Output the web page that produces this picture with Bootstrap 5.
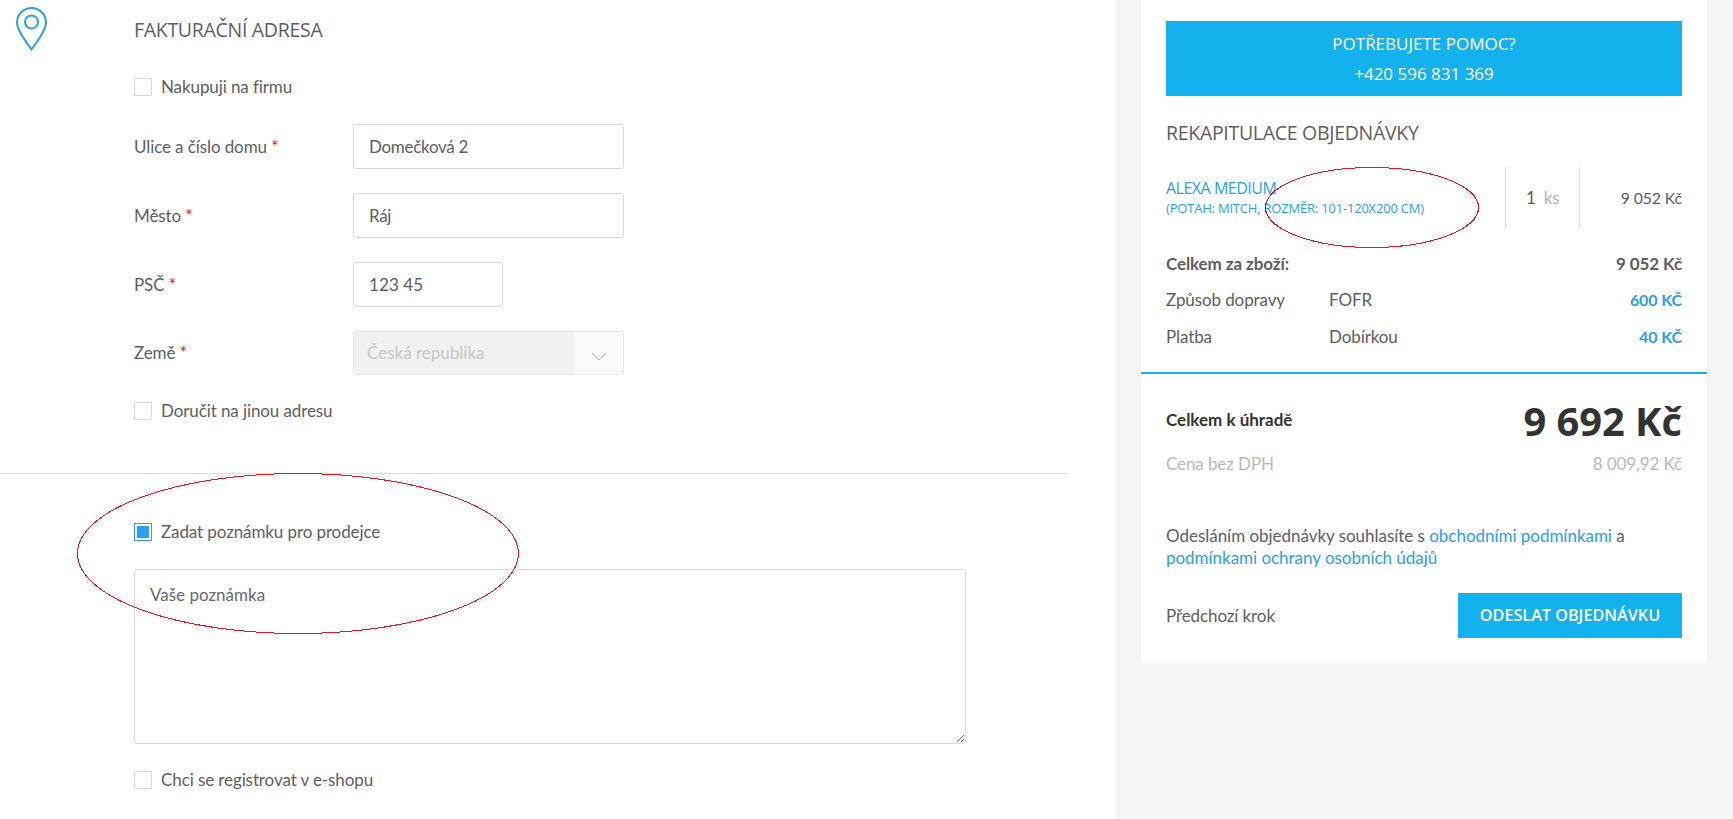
<!DOCTYPE html>
<html lang="cs">
<head>
<meta charset="utf-8">
<title>Objednávka</title>
<link href="https://cdn.jsdelivr.net/npm/bootstrap@5.3.0/dist/css/bootstrap.min.css" rel="stylesheet">
<style>
html,body{height:819px;overflow:hidden}
body{font-family:"Lato","Noto Sans",sans-serif;font-size:17px;color:#5e5e5e;background:#fff;position:relative;line-height:24px;letter-spacing:-.1px}
a{color:#2a9df4;text-decoration:none}
.page-wrap{height:819px}
.left-side{width:1116px;flex:none}
.left-block{width:1067px}
.pin-col{width:134px;padding:7px 0 0 16px;flex:none}
.main-col{width:832px}
.head-txt{font-family:"Open Sans",sans-serif;font-size:19.5px;line-height:24px;color:#5e5e5e;text-transform:uppercase;margin:0;letter-spacing:-.3px;font-weight:400}
.head-top{margin-top:18px}
.chk-row{height:24px;display:flex;align-items:center;gap:9px;margin:0}
.chk-row .form-check-input{width:18px;height:18px;margin:0;border-radius:0;border:1px solid #d9d9d9;flex:none}
.chk-row .form-check-input:checked{background-color:#2a9df4;background-image:none;border-color:#2a9df4;box-shadow:inset 0 0 0 2px #fff}
.field-row{display:flex;align-items:center;height:45px}
.field-lbl{width:219px;flex:none;margin:0}
.req{color:#e3120b}
.fld{height:45px;border:1px solid #d9d9d9;border-radius:3px;padding:0 15px;font-size:17px;color:#5e5e5e;width:271px;letter-spacing:-.3px}
.fld-short{width:150px;letter-spacing:.1px}
.sel-box{display:flex;width:271px;height:44px;border:1px solid #e6e6e6;border-radius:3px;overflow:hidden;background:#f9f9f9}
.sel-box .form-select{flex:1;min-width:0;border:0;border-radius:0;background:#f1f1f1;background-image:none;color:#c6c6c6;font-size:17px;padding:0 13px;opacity:1;height:100%}
.sel-arrow{width:49px;display:flex;align-items:center;justify-content:center;padding-top:8px}
.hr-line{height:1px;background:#dcdcdc;width:1067px;margin-top:50px}
.note-area{height:175px;width:832px;border:1px solid #d9d9d9;border-radius:3px;padding:12px 15px;font-size:17px;color:#5e5e5e;display:block;box-shadow:none}
.note-area::placeholder{color:#6a6a6a;opacity:1}
.side-col{flex:1;background:#f5f5f5;padding:0 26px 0 25px}
.panel-box{background:#fff;height:663px}
.panel-pad{padding:21px 25px 0}
.help-box{background:#14b1ef;color:#fff;height:75px;padding:8px 0;text-align:center;line-height:30px;font-size:17px;font-family:"Open Sans",sans-serif;font-weight:500;letter-spacing:0}
.item-row{display:flex;height:61px;margin-top:22px}
.item-name{width:339px;flex:none;align-self:center;color:#2a9df4}
.item-title{font-size:16px;line-height:20px;font-family:"Open Sans",sans-serif;letter-spacing:-.5px}
.item-sub{font-size:13px;line-height:20px;font-family:"Open Sans",sans-serif;letter-spacing:-.2px}
.item-qty{width:75px;flex:none;border-left:1px solid #d9d9d9;border-right:1px solid #d9d9d9;display:flex;align-items:center;padding-left:20px;gap:8px}
.ks-txt{color:#b5b5b5}
.item-price{flex:1;display:flex;align-items:center;justify-content:flex-end;font-size:15.800px}
.sum-row{display:flex;height:24px;align-items:center}
.sum-lbl{width:163px;flex:none}
.blue-val{margin-left:auto;color:#2a9df4;font-weight:700;font-size:16px}
.blue-line{height:2px;background:#14b1ef;margin-top:23px}
.pay-row{display:flex;height:50px;align-items:center;justify-content:space-between;margin-top:22px}
.pay-lbl{font-family:"Lato",sans-serif;font-weight:700;font-size:17px;color:#333;margin-top:-3px;letter-spacing:0}
.pay-val{font-family:"Open Sans",sans-serif;font-weight:700;font-size:39.800px;color:#333;line-height:50px;letter-spacing:0}
.vat-row{display:flex;height:24px;justify-content:space-between;margin-top:6px;color:#b9b9b9;align-items:center}
.terms-txt{margin:49px 0 0;line-height:22px;letter-spacing:-.03px}
.act-row{display:flex;justify-content:space-between;align-items:center;margin-top:24px}
.send-btn{background:#14b1ef;color:#fff;width:224px;height:45px;border:0;border-radius:0;font-size:16.200px;font-family:"Open Sans",sans-serif;padding:0;font-weight:600;letter-spacing:0}
.send-btn:hover{background:#14b1ef;color:#fff}
.oval-mark{position:absolute;pointer-events:none;fill:none;stroke:#ee0f26;stroke-width:1;shape-rendering:crispEdges}
.oval-one{left:77px;top:473px}
.oval-two{left:1265px;top:167px}
.mt-chk1{margin-top:33px}
.mt-f1{margin-top:25px}
.mt-f2{margin-top:24px}
.mt-f3{margin-top:23px}
.mt-c2{margin-top:46px}
.mt-s1{margin-top:12px}
.mt-s2{margin-top:13px}
</style>
</head>
<body>
<div class="d-flex page-wrap">
  <div class="left-side">
    <div class="left-block">
      <div class="d-flex">
        <div class="pin-col">
          <svg width="31" height="44" viewBox="0 0 31 44" fill="none" stroke="#2a9df4" stroke-width="2"><path d="M15.5 1C7.5 1 1 7.500 1 15.200C1 22.500 8.500 32.500 15.500 42.500C22.500 32.500 30 22.500 30 15.200C30 7.500 23.500 1 15.500 1Z"/><circle cx="15.500" cy="15" r="6.500"/></svg>
        </div>
        <div class="main-col">
          <h2 class="head-txt head-top">Fakturační adresa</h2>
          <label class="chk-row mt-chk1"><input class="form-check-input" type="checkbox"><span>Nakupuji na firmu</span></label>
          <div class="field-row mt-f1"><label class="field-lbl">Ulice a číslo domu <span class="req">*</span></label><input class="form-control fld" value="Domečková 2"></div>
          <div class="field-row mt-f2"><label class="field-lbl">Město <span class="req">*</span></label><input class="form-control fld" value="Ráj"></div>
          <div class="field-row mt-f2"><label class="field-lbl">PSČ <span class="req">*</span></label><input class="form-control fld fld-short" value="123 45"></div>
          <div class="field-row mt-f3"><label class="field-lbl">Země <span class="req">*</span></label>
            <div class="sel-box"><select class="form-select" disabled><option>Česká republika</option></select>
              <span class="sel-arrow"><svg width="16" height="9" viewBox="0 0 16 9" fill="none" stroke="#b5b5b5" stroke-width="1"><path d="M1 1l7 7 7-7"/></svg></span></div>
          </div>
          <label class="chk-row mt-f2"><input class="form-check-input" type="checkbox"><span>Doručit na jinou adresu</span></label>
        </div>
      </div>
      <div class="hr-line"></div>
      <div class="d-flex">
        <div class="pin-col"></div>
        <div class="main-col">
          <label class="chk-row mt-c2"><input class="form-check-input" type="checkbox" checked><span>Zadat poznámku pro prodejce</span></label>
          <textarea class="form-control note-area mt-f1" placeholder="Vaše poznámka"></textarea>
          <label class="chk-row mt-f2"><input class="form-check-input" type="checkbox"><span>Chci se registrovat v e-shopu</span></label>
        </div>
      </div>
    </div>
  </div>
  <div class="side-col">
    <div class="panel-box">
      <div class="panel-pad">
        <div class="help-box"><div>POTŘEBUJETE POMOC?</div><div>+420 596 831 369</div></div>
        <h2 class="head-txt mt-f1">Rekapitulace objednávky</h2>
        <div class="item-row">
          <div class="item-name"><div class="item-title">ALEXA MEDIUM</div><div class="item-sub">(POTAH: MITCH, ROZMĚR: 101-120X200 CM)</div></div>
          <div class="item-qty"><span>1</span><span class="ks-txt">ks</span></div>
          <div class="item-price">9 052 Kč</div>
        </div>
        <div class="sum-row fw-bold mt-f2"><span>Celkem za zboží:</span><span class="ms-auto">9 052 Kč</span></div>
        <div class="sum-row mt-s1"><span class="sum-lbl">Způsob dopravy</span><span>FOFR</span><span class="blue-val">600 KČ</span></div>
        <div class="sum-row mt-s2"><span class="sum-lbl">Platba</span><span>Dobírkou</span><span class="blue-val">40 KČ</span></div>
      </div>
      <div class="blue-line"></div>
      <div class="panel-pad pt-0">
        <div class="pay-row"><span class="pay-lbl">Celkem k úhradě</span><span class="pay-val">9 692 Kč</span></div>
        <div class="vat-row"><span>Cena bez DPH</span><span>8 009,92 Kč</span></div>
        <p class="terms-txt">Odesláním objednávky souhlasíte s <a href="#">obchodními podmínkami</a> a <a href="#">podmínkami ochrany osobních údajů</a></p>
        <div class="act-row"><span>Předchozí krok</span><button class="btn send-btn" type="button">ODESLAT OBJEDNÁVKU</button></div>
      </div>
    </div>
  </div>
</div>
<svg class="oval-mark oval-one" width="442" height="161" viewBox="0 0 442 161"><ellipse cx="221" cy="80.500" rx="220.500" ry="80"/></svg>
<svg class="oval-mark oval-two" width="214" height="81" viewBox="0 0 214 81"><ellipse cx="107" cy="40.500" rx="106.500" ry="40"/></svg>
<script src="https://cdn.jsdelivr.net/npm/bootstrap@5.3.0/dist/js/bootstrap.bundle.min.js"></script>
</body>
</html>
